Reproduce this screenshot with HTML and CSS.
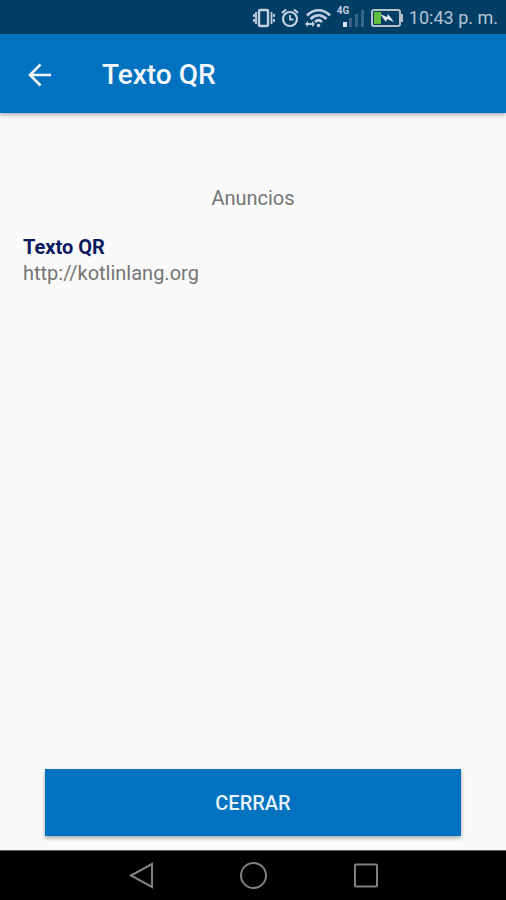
FILE: index.html
```html
<!DOCTYPE html>
<html lang="es">
<head>
    <meta charset="UTF-8">
    <meta name="viewport" content="width=device-width, initial-scale=1.0">
    <title>Texto QR</title>
    <link rel="stylesheet" href="styles.css">
</head>
<body>
    <div class="status-bar">
        <svg width="22" height="20" viewBox="0 0 22 20" fill="none" stroke="#c3cfdf" stroke-width="2.400">
            <rect x="6" y="2" width="9" height="16" rx="1"/>
            <path d="M3 4v12M18.500 4v12" stroke-width="1.800"/>
            <path d="M1 6v3M1 11v3M21 6v3M21 11v3" stroke-width="1.800"/>
        </svg>
        <svg width="18" height="20" viewBox="0 0 18 20" fill="none" stroke="#c3cfdf" stroke-width="2.200">
            <circle cx="9" cy="11" r="7"/>
            <path d="M1 5l4-3.500M17 5l-4-3.500"/>
            <path d="M9 7v4.500h3.500" stroke-width="1.800"/>
        </svg>
        <svg width="26" height="20" viewBox="0 0 26 20" fill="none" stroke="#c3cfdf" stroke-width="2.600">
            <path d="M2 7.500C8.500 0.500 18.500 0.500 25 7.500"/>
            <path d="M5.500 11C10.500 6 16.500 6 21.500 11"/>
            <path d="M10 14C12.500 11.500 14.500 11.500 17 14"/>
            <circle cx="13.500" cy="17.500" r="1.800" fill="#c3cfdf" stroke="none"/>
            <path d="M0 16l3-3v2h4v-2l3 3-3 3v-2H3v2z" fill="#c3cfdf" stroke="none"/>
        </svg>
        <div class="signal">
            <span class="network">4G</span>
            <svg width="28" height="20" viewBox="0 0 28 20">
                <path d="M6 14h4v5H6z" fill="#dce5ef"/>
                <path d="M12 10h3v9h-3zM18 6h3v13h-3zM24 2h3v17h-3z" fill="#386586"/>
            </svg>
        </div>
        <svg class="battery" width="32" height="18" viewBox="0 0 32 18">
            <rect x="1" y="1" width="28" height="16" rx="2" fill="none" stroke="#b8bfc9" stroke-width="2"/>
            <path d="M30 5h2v8h-2z" fill="#b8bfc9"/>
            <path d="M3 3h7v12H3z" fill="#62bd3c"/>
            <path d="M9 5l7 3 1-3 6 8-7-3-1 3z" fill="#e2e8ef"/>
        </svg>
        <span class="clock">10:43 p. m.</span>
    </div>

    <header class="app-bar">
        <button class="back" type="button" aria-label="Atrás">
            <svg width="24" height="24" viewBox="0 0 24 24" fill="none" stroke="#f4f8fc" stroke-width="2.600">
                <path d="M23 12H2M12.500 1.500L2 12l10.500 10.500"/>
            </svg>
        </button>
        <h1>Texto QR</h1>
    </header>

    <main class="content">
        <p class="section">Anuncios</p>
        <h2>Texto QR</h2>
        <p class="result">http://kotlinlang.org</p>
        <button class="close" type="button">CERRAR</button>
    </main>

    <nav class="nav-bar">
        <button type="button" aria-label="Volver">
            <svg width="28" height="28" viewBox="0 0 28 28">
                <path d="M4 13.500L25 2v23z"/>
            </svg>
        </button>
        <button type="button" aria-label="Inicio">
            <svg width="28" height="28" viewBox="0 0 28 28">
                <circle cx="14.500" cy="13.500" r="12.500"/>
            </svg>
        </button>
        <button type="button" aria-label="Recientes">
            <svg width="28" height="28" viewBox="0 0 28 28">
                <rect x="4" y="2.500" width="22" height="22" rx="1"/>
            </svg>
        </button>
    </nav>
</body>
</html>
```

FILE: styles.css
```css
* {
    box-sizing: border-box;
}
body {
    margin: 0;
    min-height: 100vh;
    display: flex;
    flex-direction: column;
    background-color: #fafafa;
    font-family: Roboto, "Liberation Sans", sans-serif;
    color: #757575;
}
h1, h2, p {
    margin: 0;
}
svg {
    display: block;
}
button {
    padding: 0;
    border: none;
    background: none;
    font-family: inherit;
    cursor: pointer;
}
.status-bar {
    height: 34px;
    padding: 2px 8px 0;
    display: flex;
    align-items: center;
    justify-content: flex-end;
    gap: 6px;
    background-color: #003e66;
}
.signal {
    position: relative;
}
.network {
    position: absolute;
    top: -2px;
    left: 0;
    font-size: 10px;
    line-height: 10px;
    font-weight: 700;
    color: #c3cfdf;
}
.clock {
    font-size: 18px;
    line-height: 24px;
    color: #b5c4d4;
}
.app-bar {
    height: 79px;
    padding: 2px 28px 0;
    display: flex;
    align-items: center;
    gap: 50px;
    background-color: #0072bf;
    box-shadow: 0 2px 4px rgba(0, 0, 0, 0.3);
}
.app-bar h1 {
    font-size: 28px;
    line-height: 32px;
    font-weight: 500;
    color: #f4f8fc;
}
.content {
    flex: 1;
    padding: 72px 23px 14px;
    display: flex;
    flex-direction: column;
    font-size: 20px;
    line-height: 26px;
}
.section {
    margin-bottom: 23px;
    text-align: center;
}
.content h2 {
    font-size: 20px;
    line-height: 26px;
    font-weight: 700;
    color: #0b1a5e;
}
.close {
    height: 67px;
    margin: auto 22px 0;
    background-color: #0072bf;
    box-shadow: 0 2px 4px rgba(0, 0, 0, 0.35);
    font-size: 20px;
    font-weight: 500;
    color: #e6f3fc;
}
.nav-bar {
    height: 50px;
    display: flex;
    align-items: center;
    justify-content: center;
    gap: 84px;
    background-color: #000;
    border-top: 1px solid #555;
}
.nav-bar svg {
    fill: none;
    stroke: #808080;
    stroke-width: 2;
}
```
